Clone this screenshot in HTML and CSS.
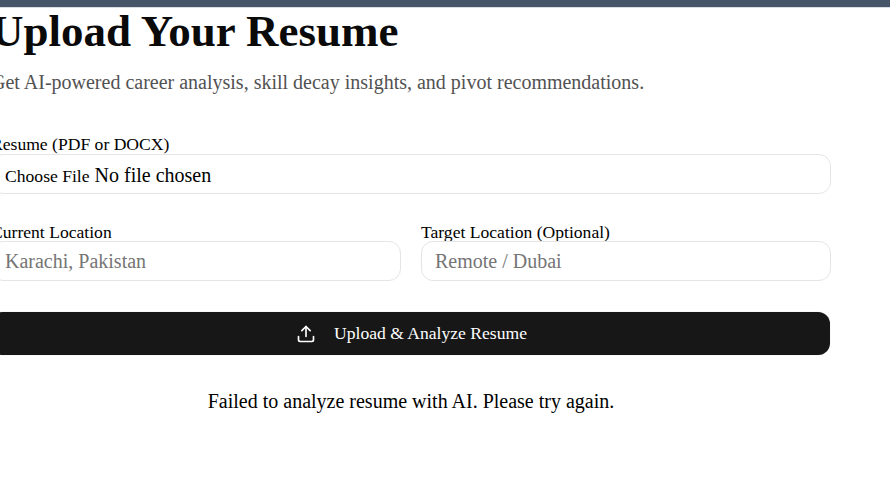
FILE: index.html
```html
<!DOCTYPE html>
<html lang="en">
<head>
    <meta charset="UTF-8">
    <meta name="viewport" content="width=device-width, initial-scale=1.0">
    <title>Upload Your Resume</title>
    <link rel="stylesheet" href="styles.css">
</head>
<body>
    <div class="top-bar"></div>
    <main class="upload">
        <h1 class="title">Upload Your Resume</h1>
        <p class="subtitle">Get AI-powered career analysis, skill decay insights, and pivot recommendations.</p>
        <form class="form">
            <div class="field">
                <label class="label" for="resume">Resume (PDF or DOCX)</label>
                <input class="input file-input" id="resume" type="file">
            </div>
            <div class="location-row">
                <div class="field">
                    <label class="label" for="current">Current Location</label>
                    <input class="input" id="current" type="text" placeholder="Karachi, Pakistan">
                </div>
                <div class="field">
                    <label class="label" for="target">Target Location (Optional)</label>
                    <input class="input" id="target" type="text" placeholder="Remote / Dubai">
                </div>
            </div>
            <button class="submit" type="button">
                <svg class="submit-icon" viewBox="0 0 24 24" width="20" height="20" fill="none" stroke="currentColor" stroke-width="2" stroke-linecap="round" stroke-linejoin="round">
                    <path d="M21 15v4a2 2 0 0 1-2 2H5a2 2 0 0 1-2-2v-4"/>
                    <path d="M17 8l-5-5-5 5"/>
                    <path d="M12 3v12"/>
                </svg>
                Upload &amp; Analyze Resume
            </button>
        </form>
        <p class="error">Failed to analyze resume with AI. Please try again.</p>
    </main>
</body>
</html>
```

FILE: styles.css
```css
body {
    margin: 0;
    height: 493px;
    overflow: hidden;
    background-color: #fff;
    font-family: "Liberation Serif", serif;
    color: #000;
}
.top-bar {
    height: 7px;
    background-color: #475569;
    border-bottom: 1px solid #d9dde3;
}
.upload {
    width: 840px;
    margin-left: -9px;
}
.title {
    margin: 0;
    font-size: 45px;
    line-height: 46px;
    color: #0a0a0a;
}
.subtitle {
    margin: 16px 0 0;
    font-size: 20px;
    line-height: 24px;
    color: #525252;
}
.form {
    display: flex;
    flex-direction: column;
    margin-top: 41px;
}
.field {
    display: flex;
    flex-direction: column;
    flex: 1;
}
.label {
    font-size: 17.6px;
    line-height: 18px;
}
.input {
    height: 40px;
    box-sizing: border-box;
    padding: 0 13px;
    border: 1px solid #e5e5e5;
    border-radius: 12px;
    background: #fff;
    font-family: inherit;
    font-size: 20px;
    outline: none;
}
.input::placeholder {
    color: #757575;
}
.file-input {
    margin-top: 1px;
    padding-top: 9px;
}
.file-input::file-selector-button {
    border: none;
    background: none;
    padding: 0;
    margin-right: 5px;
    font-family: inherit;
    font-size: 17.6px;
}
.location-row {
    display: flex;
    gap: 20px;
    margin-top: 29px;
}
.submit {
    display: flex;
    align-items: center;
    justify-content: center;
    gap: 18px;
    height: 43px;
    margin: 31px 1px 0 0;
    padding: 0 0 0 2px;
    border: none;
    border-radius: 12px;
    background-color: #171717;
    box-shadow: 0 0 1px rgba(0, 0, 0, 0.3);
    color: #fff;
    font-family: inherit;
    font-size: 17.6px;
}
.submit-icon {
    flex-shrink: 0;
}
.error {
    margin: 34px 0 0;
    text-align: center;
    font-size: 20px;
    line-height: 24px;
}
```
